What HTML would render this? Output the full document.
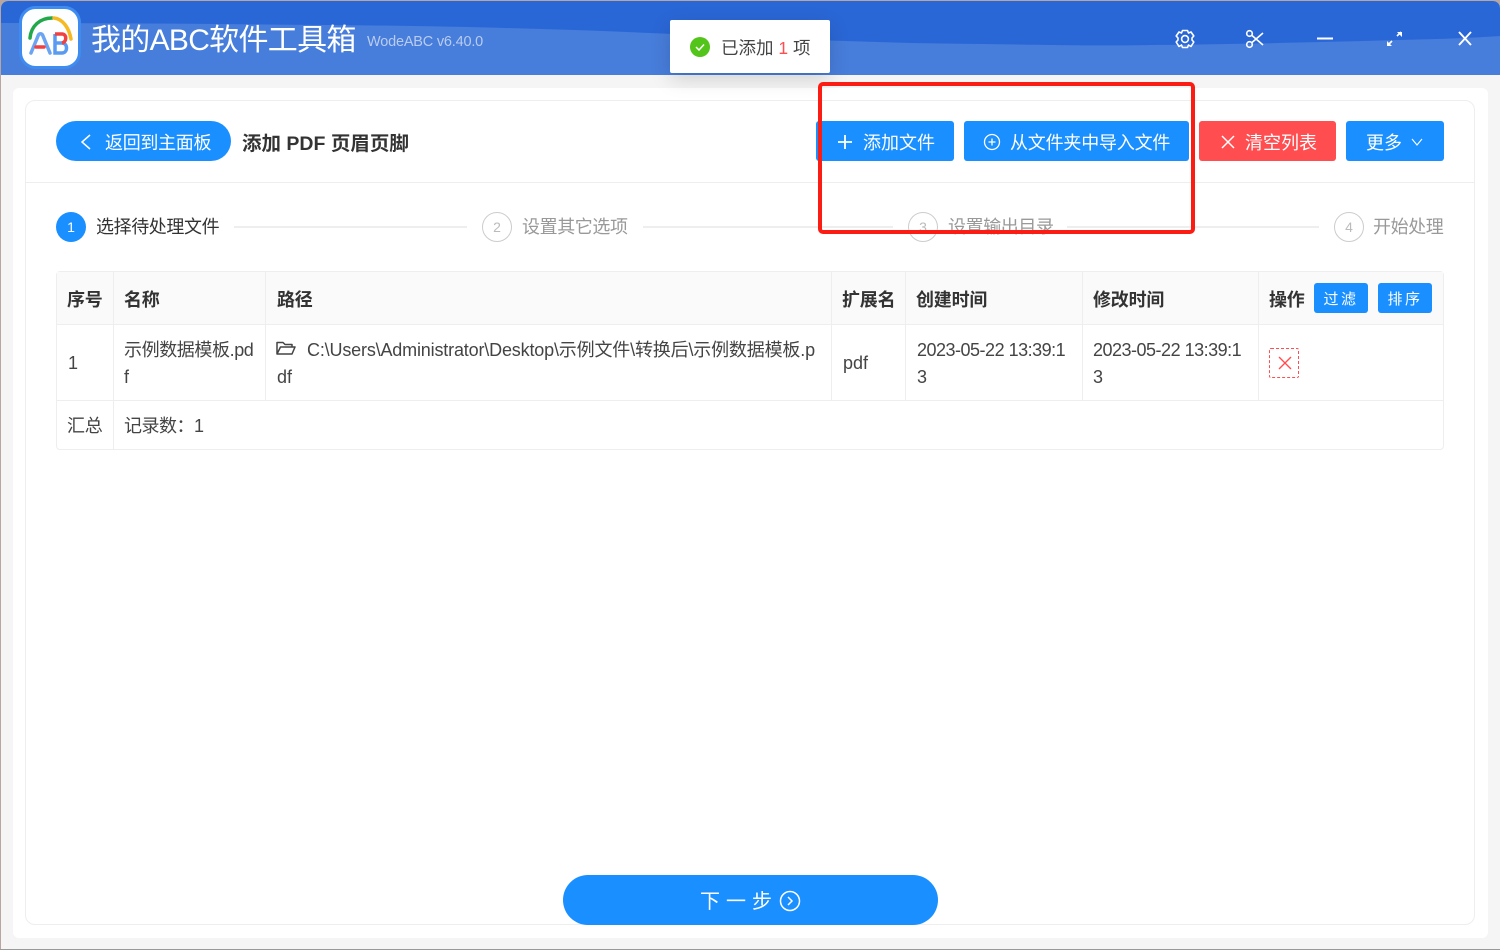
<!DOCTYPE html>
<html><head><meta charset="utf-8"><style>
*{box-sizing:border-box}
html,body{margin:0;padding:0;width:1500px;height:950px;overflow:hidden;background:#f5f5f5}
body{position:relative;font-family:"Liberation Sans","Noto Sans CJK SC",sans-serif;color:#333;font-size:18px}
.a{position:absolute;white-space:nowrap}
.btn{position:absolute;top:121px;height:40px;background:#1a8fff;color:#fff;border-radius:3px;line-height:45px;white-space:nowrap;font-weight:400}
.th{font-weight:700;color:#333;font-size:18px;line-height:26px;top:287px;letter-spacing:-.2px}
.cell{font-size:18px;color:#444;line-height:27px}
.v{position:absolute;width:1px;background:#eeeeee}
.h{position:absolute;height:1px;background:#eeeeee}
.sl{position:absolute;top:226px;height:2px;background:#eeeeee}
.sc{position:absolute;top:212px;width:30px;height:30px;border-radius:50%;border:1px solid #ccc;color:#bbb;font-size:14px;text-align:center;line-height:28px;background:#fff}
.st{position:absolute;top:214px;font-size:18px;line-height:26px;color:#999;white-space:nowrap;letter-spacing:-.4px}
</style></head><body>
<div class="a" style="left:0;top:0;width:1500px;height:950px;background:#b9a6a0"></div>
<div class="a" style="left:1px;top:1px;width:1499px;height:948px;background:#f5f5f5;border-radius:7px 7px 0 0;overflow:hidden">
<svg class="a" style="left:-1px;top:-1px" width="1500" height="75" viewBox="0 0 1500 75">
<path d="M0 0H1500V75H0Z" fill="#2a67d6"/>
<path d="M0 23C110 23 220 24 330 25C450 26 560 29 650 33C760 38 870 43 983 44C1060 45 1100 46 1150 45C1250 44 1330 42 1400 40C1440 39 1470 38 1500 36V75H0Z" fill="#477ddb"/>
</svg>
</div>
<div class="a" style="left:0;top:949px;width:1500px;height:1px;background:#999"></div>
<svg class="a" style="left:19px;top:6px" width="62" height="63" viewBox="0 0 62 63">
<rect x="1.500" y="1.500" width="59" height="60" rx="15" fill="#fdfeff" stroke="#3f8cf0" stroke-width="3"/>
<path d="M11 32C12 20 21 12 33 12" fill="none" stroke="#22a84a" stroke-width="3.500" stroke-linecap="round"/>
<path d="M35 12C44 13 50 22 52 33" fill="none" stroke="#f5b921" stroke-width="3.500" stroke-linecap="round"/>
<path d="M12 47L19 30C20 27 23 27 24 30L31 47" fill="none" stroke="#6ba4f0" stroke-width="3.500" stroke-linecap="round"/>
<path d="M17 41H25" stroke="#f04040" stroke-width="3.500" stroke-linecap="round"/>
<path d="M36 37H43C49 37 49 47 43 47H36V28" fill="none" stroke="#5a9bf2" stroke-width="3.500"/>
<path d="M43 37C48 36 48 28 43 28H36" fill="none" stroke="#f04040" stroke-width="3.500"/>
</svg>
<div class="a" style="left:91px;top:19px;font-size:30px;line-height:44px;color:#fff;letter-spacing:-.7px">我的ABC软件工具箱</div>
<div class="a" style="left:367px;top:31px;font-size:14.500px;line-height:22px;color:#b9ccef;letter-spacing:-.2px">WodeABC v6.40.0</div>

<svg class="a" style="left:1170px;top:24px" width="310" height="30" viewBox="0 0 310 30" fill="none" stroke="#fff" stroke-width="1.600">
<path d="M12.500 6.500H17.500L18.500 9L21 8L23.800 12L22 14V16L23.800 18L21 22.500L18.500 21L17.500 23.500H12.500L11.500 21L9 22.500L6.200 18L8 16V14L6.200 12L9 8L11.500 9Z" stroke-linejoin="round"/><circle cx="15" cy="15" r="3.400"/>
<circle cx="79.500" cy="9.500" r="2.800"/><circle cx="79.500" cy="20.500" r="2.800"/><path d="M82 11.500L93 21M82 18.500L93 9"/>
<path d="M147 14.500H163" stroke-width="2"/>
<path d="M218 21L222 17M227 12L231 8" /><path d="M217 17V22H222Z M227 8H232V13Z" fill="#fff" stroke="none"/>
<path d="M289 8L301 21M301 8L289 21" stroke-width="1.900"/>
</svg>

<div class="a" style="left:13px;top:88px;width:1475px;height:850px;background:#fff;border-radius:6px"></div>
<div class="a" style="left:25px;top:100px;width:1450px;height:825px;background:#fff;border:1px solid #eeeeee;border-radius:10px"></div>
<div class="h" style="left:26px;top:182px;width:1448px"></div>

<div class="a" style="left:56px;top:121px;width:175px;height:40px;background:#1a8fff;border-radius:20px;color:#fff;font-size:18px;line-height:45px;padding-left:49px;font-weight:400;letter-spacing:-.3px">返回到主面板</div>
<svg class="a" style="left:78px;top:133px" width="16" height="18" viewBox="0 0 16 18"><path d="M12 2L4 9L12 16" fill="none" stroke="#fff" stroke-width="1.500"/></svg>
<div class="a" style="left:242px;top:130px;font-size:19.500px;font-weight:700;line-height:28px;color:#333">添加 PDF 页眉页脚</div>

<div class="btn" style="left:816px;width:138px;font-size:18px;padding-left:47px">添加文件</div>
<svg class="a" style="left:836px;top:133px" width="18" height="18" viewBox="0 0 18 18"><path d="M9 2V16M2 9H16" stroke="#fff" stroke-width="1.800"/></svg>
<div class="btn" style="left:964px;width:225px;font-size:18px;padding-left:46px;letter-spacing:-.2px">从文件夹中导入文件</div>
<svg class="a" style="left:983px;top:133px" width="18" height="18" viewBox="0 0 18 18"><circle cx="9" cy="9" r="7.500" fill="none" stroke="#fff" stroke-width="1.300"/><path d="M9 5.500V12.500M5.500 9H12.500" stroke="#fff" stroke-width="1.300"/></svg>
<div class="btn" style="left:1199px;width:137px;background:#ff4d50;font-size:18px;padding-left:46px">清空列表</div>
<svg class="a" style="left:1219px;top:133px" width="18" height="18" viewBox="0 0 18 18"><path d="M3 3L15 15M15 3L3 15" stroke="#fff" stroke-width="1.500"/></svg>
<div class="btn" style="left:1346px;width:98px;font-size:18px;padding-left:20px">更多</div>
<svg class="a" style="left:1410px;top:136px" width="14" height="12" viewBox="0 0 14 12"><path d="M2 3L7 9L12 3" fill="none" stroke="#fff" stroke-width="1.100"/></svg>

<!-- steps -->
<div class="a" style="left:56px;top:212px;width:30px;height:30px;border-radius:50%;background:#1a8fff;color:#fff;font-size:14px;text-align:center;line-height:30px">1</div>
<div class="st" style="left:96px;color:#333">选择待处理文件</div>
<div class="sl" style="left:234px;width:233px"></div>
<div class="sc" style="left:482px">2</div>
<div class="st" style="left:522px">设置其它选项</div>
<div class="sl" style="left:643px;width:250px"></div>
<div class="sc" style="left:908px">3</div>
<div class="st" style="left:948px">设置输出目录</div>
<div class="sl" style="left:1067px;width:252px"></div>
<div class="sc" style="left:1334px">4</div>
<div class="st" style="left:1373px">开始处理</div>

<!-- table -->
<div class="a" style="left:56px;top:271px;width:1388px;height:179px;border:1px solid #eeeeee;border-radius:4px;background:#fff"></div>
<div class="a" style="left:57px;top:272px;width:1386px;height:52px;background:#fafafa"></div>
<div class="h" style="left:57px;top:324px;width:1386px"></div>
<div class="h" style="left:57px;top:400px;width:1386px"></div>
<div class="v" style="left:113px;top:272px;height:177px"></div>
<div class="v" style="left:265px;top:272px;height:128px"></div>
<div class="v" style="left:831px;top:272px;height:128px"></div>
<div class="v" style="left:905px;top:272px;height:128px"></div>
<div class="v" style="left:1082px;top:272px;height:128px"></div>
<div class="v" style="left:1258px;top:272px;height:128px"></div>

<div class="a th" style="left:67px">序号</div>
<div class="a th" style="left:124px">名称</div>
<div class="a th" style="left:277px">路径</div>
<div class="a th" style="left:842px">扩展名</div>
<div class="a th" style="left:916px">创建时间</div>
<div class="a th" style="left:1093px">修改时间</div>
<div class="a th" style="left:1269px">操作</div>
<div class="a" style="left:1314px;top:283px;width:54px;height:30px;background:#1a8fff;border-radius:3px;color:#fff;font-size:15px;line-height:33px;text-align:center;letter-spacing:2.500px">过滤</div>
<div class="a" style="left:1378px;top:283px;width:54px;height:30px;background:#1a8fff;border-radius:3px;color:#fff;font-size:15px;line-height:33px;text-align:center;letter-spacing:2.500px">排序</div>

<div class="a cell" style="left:68px;top:350px">1</div>
<div class="a cell" style="left:124px;top:337px;letter-spacing:-.4px">示例数据模板.pd<br>f</div>
<svg class="a" style="left:275px;top:340px" width="22" height="16" viewBox="0 0 22 16"><path d="M2 14V2.500H8L10 4.500H17V7M2 14H17L20 7H5.500L2 14Z" fill="none" stroke="#444" stroke-width="1.500" stroke-linejoin="round"/></svg>
<div class="a cell" style="left:307px;top:337px;letter-spacing:-.17px">C:\Users\Administrator\Desktop\示例文件\转换后\示例数据模板.p</div>
<div class="a cell" style="left:277px;top:364px">df</div>
<div class="a cell" style="left:843px;top:350px">pdf</div>
<div class="a cell" style="left:917px;top:337px;letter-spacing:-.5px">2023-05-22 13:39:1<br>3</div>
<div class="a cell" style="left:1093px;top:337px;letter-spacing:-.5px">2023-05-22 13:39:1<br>3</div>
<div class="a" style="left:1269px;top:348px;width:30px;height:30px;border:1px dashed #ff4d50;border-radius:2px"></div>
<svg class="a" style="left:1277px;top:355px" width="16" height="16" viewBox="0 0 16 16"><path d="M2 2L14 14M14 2L2 14" stroke="#ff4d50" stroke-width="1.400"/></svg>
<div class="a cell" style="left:67px;top:413px;letter-spacing:-.2px">汇总</div>
<div class="a cell" style="left:124px;top:413px;letter-spacing:-.5px">记录数：1</div>

<!-- next -->
<div class="a" style="left:563px;top:875px;width:375px;height:50px;background:#1a8fff;border-radius:25px"></div>
<div class="a" style="left:700px;top:888px;font-size:20px;line-height:28px;color:#fff;letter-spacing:6px;font-weight:400">下一步</div>
<svg class="a" style="left:779px;top:890px" width="22" height="22" viewBox="0 0 22 22"><circle cx="11" cy="11" r="9.500" fill="none" stroke="#fff" stroke-width="1.500"/><path d="M9 7L13 11L9 15" fill="none" stroke="#fff" stroke-width="1.500"/></svg>

<!-- toast -->
<div class="a" style="left:670px;top:20px;width:160px;height:53px;background:#fff;border-radius:2px;box-shadow:0 6px 20px rgba(0,0,0,.15)"></div>
<svg class="a" style="left:690px;top:37px" width="20" height="20" viewBox="0 0 20 20"><circle cx="10" cy="10" r="10" fill="#52c41a"/><path d="M6 10L9 13L14 7.500" fill="none" stroke="#fff" stroke-width="1.500"/></svg>
<div class="a" style="left:721px;top:36px;font-size:17.500px;line-height:25px;color:#444">已添加 <span style="color:#ff4d50">1</span> 项</div>

<!-- annotation -->
<div class="a" style="left:818px;top:82px;width:377px;height:152px;border:4px solid #fb1d14;border-radius:5px"></div>
</body></html>
